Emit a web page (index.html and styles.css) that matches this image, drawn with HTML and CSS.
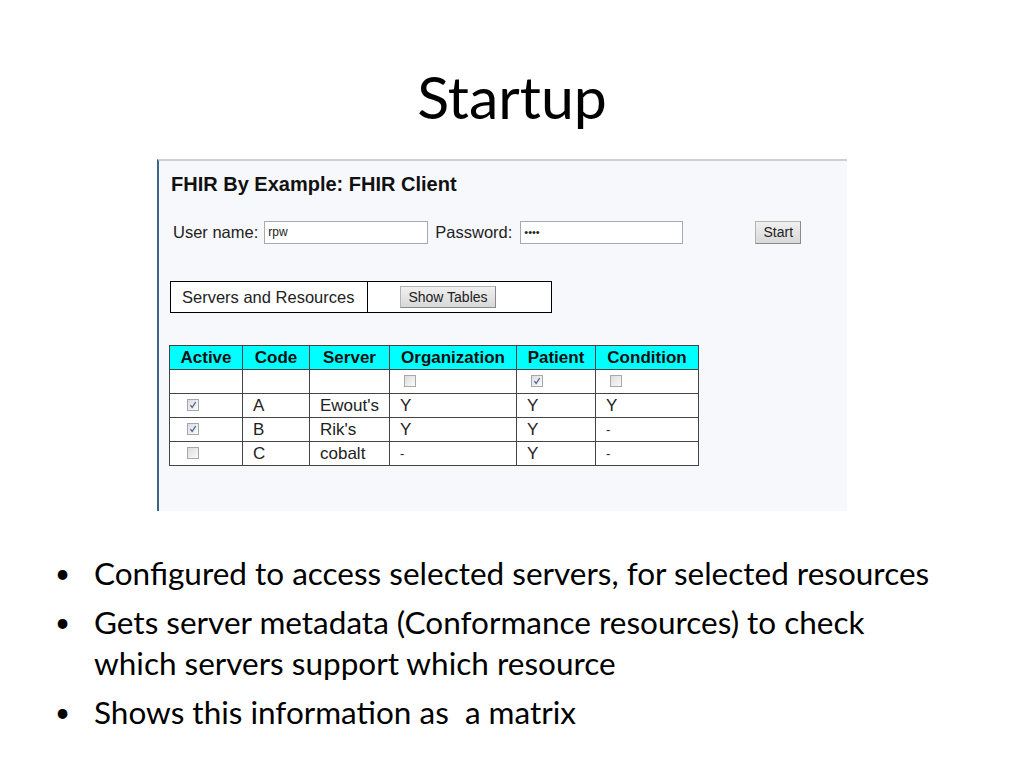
FILE: index.html
```html
<!DOCTYPE html>
<html>
<head>
<meta charset="utf-8">
<title>Startup</title>
<link rel="stylesheet" href="styles.css">
</head>
<body>
<div class="slide">
  <h1 class="title">Startup</h1>
  <div class="shot">
    <h2 class="app-title">FHIR By Example: FHIR Client</h2>
    <div class="login">
      <label class="lbl">User name:</label>
      <span class="field user">rpw</span>
      <label class="lbl pw-lbl">Password:</label>
      <span class="field pass">••••</span>
      <span class="btn start">Start</span>
    </div>
    <table class="toggle">
      <tr>
        <td class="toggle-name">Servers and Resources</td>
        <td class="toggle-act"><span class="btn show">Show Tables</span></td>
      </tr>
    </table>
    <table class="matrix">
      <thead>
        <tr>
          <th class="c1">Active</th>
          <th class="c2">Code</th>
          <th class="c3">Server</th>
          <th class="c4">Organization</th>
          <th class="c5">Patient</th>
          <th class="c6">Condition</th>
        </tr>
      </thead>
      <tbody>
        <tr>
          <td></td><td></td><td></td>
          <td><span class="cb"></span></td>
          <td><span class="cb on"><svg viewBox="0 0 12 12"><path d="M3 6.2 L5 9 L9.2 2.6" fill="none" stroke="#4d5f9a" stroke-width="1.5"/></svg></span></td>
          <td><span class="cb"></span></td>
        </tr>
        <tr>
          <td><span class="cb on act"><svg viewBox="0 0 12 12"><path d="M3 6.2 L5 9 L9.2 2.6" fill="none" stroke="#4d5f9a" stroke-width="1.5"/></svg></span></td>
          <td>A</td><td>Ewout's</td><td>Y</td><td>Y</td><td>Y</td>
        </tr>
        <tr>
          <td><span class="cb on act"><svg viewBox="0 0 12 12"><path d="M3 6.2 L5 9 L9.2 2.6" fill="none" stroke="#4d5f9a" stroke-width="1.5"/></svg></span></td>
          <td>B</td><td>Rik's</td><td>Y</td><td>Y</td><td class="dash">-</td>
        </tr>
        <tr>
          <td><span class="cb act"></span></td>
          <td>C</td><td>cobalt</td><td class="dash">-</td><td>Y</td><td class="dash">-</td>
        </tr>
      </tbody>
    </table>
  </div>
  <ul class="points">
    <li>Configured to access selected servers, for selected resources</li>
    <li>Gets server metadata (Conformance resources) to check which servers support which resource</li>
    <li>Shows this information as&nbsp; a matrix</li>
  </ul>
</div>
</body>
</html>
```
FILE: styles.css
```css
html, body {
  margin: 0;
  padding: 0;
  background: #ffffff;
}

.slide {
  width: 1024px;
  height: 768px;
  font-family: Lato, "Open Sans", sans-serif;
  color: #000;
  display: flex;
  flex-direction: column;
}

.title {
  margin: 0;
  padding-top: 64px;
  height: 159px;
  flex: none;
  box-sizing: border-box;
  text-align: center;
  font-size: 59px;
  line-height: 66px;
  font-weight: 400;
}

.shot {
  flex: none;
  margin-left: 157px;
  width: 690px;
  height: 352px;
  box-sizing: border-box;
  background: #f7f8fc;
  border-left: 2px solid #3a6585;
  border-top: 2px solid #cfcfd2;
  font-family: "Liberation Sans", Arial, sans-serif;
  padding-left: 12px;
  color: #111;
}

.app-title {
  margin: 11px 0 0 0;
  font-size: 20px;
  line-height: 24px;
  font-weight: 700;
}

.login {
  display: flex;
  align-items: center;
  margin-top: 24px;
  height: 24px;
  font-size: 16.5px;
  color: #222;
}

.lbl {
  margin-left: 2px;
  margin-right: 6px;
}

.pw-lbl {
  margin-left: 7px;
  margin-right: 8px;
}

.field {
  display: block;
  height: 23px;
  box-sizing: border-box;
  border: 1px solid #a9a9b3;
  background: #fff;
  font-size: 12px;
  line-height: 21px;
  padding-left: 3px;
}

.user {
  width: 164px;
}

.pass {
  width: 163px;
  font-size: 11px;
}

.btn {
  display: inline-block;
  box-sizing: border-box;
  background: linear-gradient(#f0f0f0, #d8d8d8);
  border: 1px solid #b4b4b4;
  border-right-color: #8a8a8a;
  border-bottom-color: #8a8a8a;
  font-size: 14px;
  color: #222;
  text-align: center;
}

.start {
  margin-left: 72px;
  width: 46px;
  height: 23px;
  line-height: 21px;
}

.toggle {
  margin-top: 37px;
  margin-left: -1px;
  border-collapse: collapse;
  border: 1px solid #000;
  height: 32px;
  background: #fff;
}

.toggle td {
  padding: 0;
  font-size: 16.5px;
  color: #222;
}

.toggle-name {
  width: 197px;
  border-right: 1px solid #000;
  padding-left: 11px !important;
  box-sizing: border-box;
}

.toggle-act {
  width: 184px;
  padding-left: 32px !important;
  box-sizing: border-box;
}

.show {
  width: 96px;
  height: 22px;
  line-height: 20px;
  vertical-align: middle;
}

.matrix {
  margin-top: 32px;
  margin-left: -2px;
  border-collapse: collapse;
  border: 1px solid #333;
  background: #fff;
  font-size: 17px;
  color: #222;
}

.matrix th,
.matrix td {
  border: 1px solid #444;
  height: 24px;
  padding: 0 0 0 10px;
  line-height: 22px;
  box-sizing: border-box;
  text-align: left;
  white-space: nowrap;
}

.matrix th {
  background: #00ffff;
  font-weight: 700;
  text-align: center;
  padding: 0;
  color: #111;
}

.c1 { width: 73px; }
.c2 { width: 67px; }
.c3 { width: 80px; }
.c4 { width: 127px; }
.c5 { width: 79px; }
.c6 { width: 103px; }

.matrix td.dash {
  font-size: 13px;
}

.cb {
  display: inline-block;
  width: 12px;
  height: 12px;
  box-sizing: border-box;
  border: 1px solid #a8a8a8;
  background: linear-gradient(135deg, #dcdcdc, #fbfbfb);
  vertical-align: middle;
  margin-left: 4px;
  margin-top: -2px;
}

.cb.act {
  margin-left: 7px;
}

.cb svg {
  display: block;
  width: 10px;
  height: 10px;
}

.points {
  flex: none;
  list-style: none;
  margin: 42px 0 0 0;
  padding: 0 0 0 94px;
  font-size: 31.5px;
  line-height: 41px;
}

.points li {
  position: relative;
  margin-bottom: 8px;
  width: 845px;
}

.points li::before {
  content: "•";
  position: absolute;
  left: -39px;
  top: 0;
  font-size: 26px;
}
```
